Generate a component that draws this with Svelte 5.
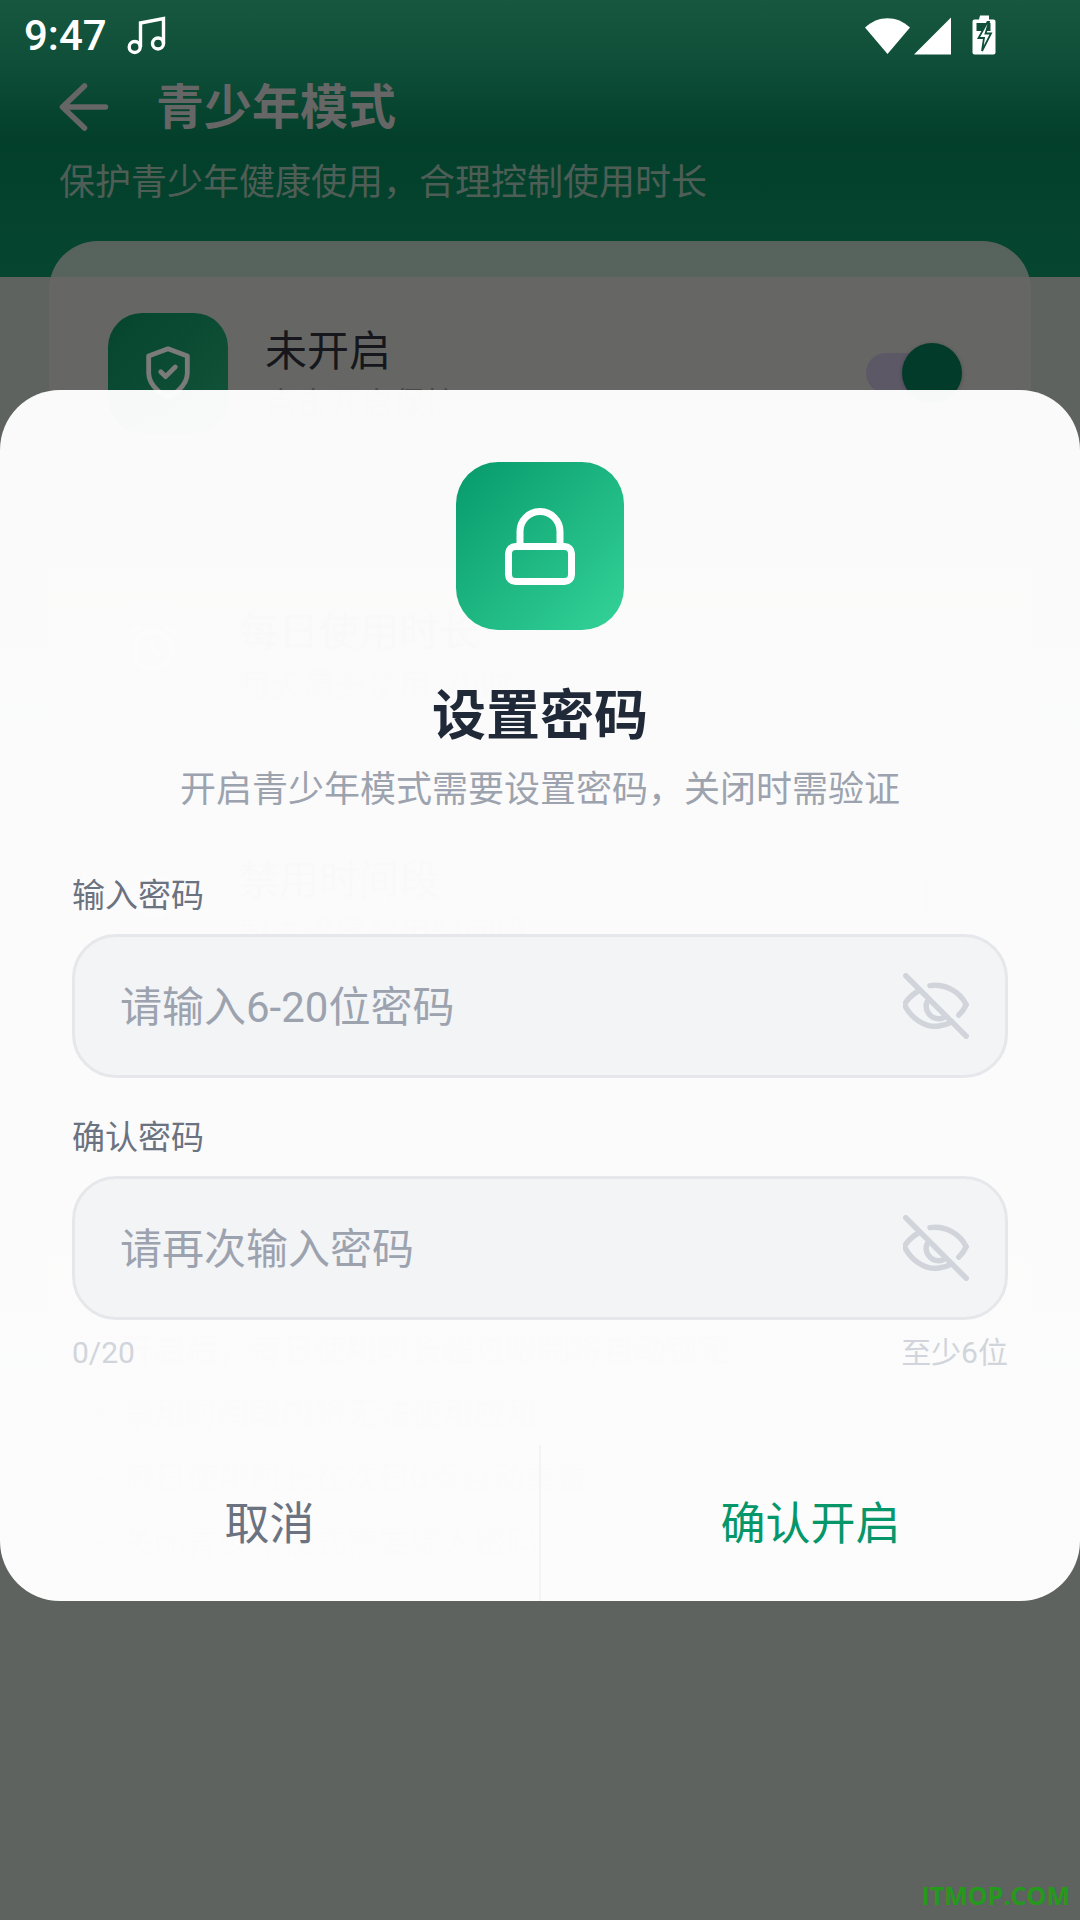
<script>
  const tips = [
    '开启后，每日使用时长超过限制将自动锁定',
    '禁用时间段内将无法使用应用',
    '每日使用时长在次日0点自动重置',
    '关闭青少年模式需要输入密码'
  ];
  const fields = [
    { label: '输入密码', hint: '请输入6-20位密码' },
    { label: '确认密码', hint: '请再次输入密码' }
  ];
</script>

<div class="screen">
  <header class="head">
    <div class="status">
      <span class="time">9:47</span>
      <svg class="note" width="40" height="42" viewBox="0 0 40 42" fill="none" stroke="#fff" stroke-width="3.400">
        <circle cx="8.700" cy="32" r="5.500" />
        <circle cx="32" cy="28.500" r="5.500" />
        <path d="M14.500 32V8L37.500 3.500V28.500" />
      </svg>
      <span class="grow"></span>
      <svg class="sys" width="135" height="42" viewBox="0 0 135 42">
        <path d="M1 13.500C14 1 33 1 46 13.500L23.500 40Z" fill="#fff" />
        <path d="M87 3.500V40.500H50Z" fill="#fff" />
        <path d="M116 1.500h9v4h4.500a2 2 0 0 1 2 2V38.500a2 2 0 0 1-2 2h-19a2 2 0 0 1-2-2V7.500a2 2 0 0 1 2-2h4.500Z" fill="#fff" />
        <path d="M112.500 9h14v8h-14Z" fill="#0f4f39" />
        <path d="M123.500 8L114.500 24h5.500l-2 13L127 19.500h-5.500L125 8Z" fill="#fff" stroke="#0f4f39" stroke-width="1.800" />
      </svg>
    </div>
    <div class="bar">
      <svg class="back" width="52" height="52" viewBox="0 0 52 52" fill="none" stroke="#666" stroke-width="5.500" stroke-linecap="round" stroke-linejoin="round">
        <path d="M47.500 25H4.500M26.500 4L4.500 25l22 21" />
      </svg>
      <span class="page-title">青少年模式</span>
    </div>
    <p class="page-sub">保护青少年健康使用，合理控制使用时长</p>
  </header>

  <section class="card">
    <div class="row first">
      <div class="tile big">
        <svg width="58" height="58" viewBox="0 0 24 24" fill="none" stroke="#7b7b7b" stroke-width="2" stroke-linecap="round" stroke-linejoin="round">
          <path d="M12 22s8-3.500 8-10V5l-8-3-8 3v7c0 6.500 8 10 8 10Z" />
          <path d="M9 11.500l2 2 4-4" />
        </svg>
      </div>
      <div class="txt">
        <div class="name">未开启</div>
        <div class="desc">点击开启保护</div>
      </div>
      <div class="toggle"><span class="thumb"></span></div>
    </div>
    <div class="row second">
      <div class="tile">
        <svg width="56" height="56" viewBox="0 0 24 24" fill="none" stroke="#a0a0a0" stroke-width="2" stroke-linecap="round">
          <circle cx="12" cy="13" r="8" /><path d="M12 9v4l2 2M3 5l3-2M21 5l-3-2" />
        </svg>
      </div>
      <div class="txt">
        <div class="name ghost">每日使用时长</div>
        <div class="desc">每天最多使用2小时</div>
      </div>
    </div>
    <div class="row third">
      <div class="tile">
        <svg width="56" height="56" viewBox="0 0 24 24" fill="none" stroke="#a0a0a0" stroke-width="2" stroke-linecap="round">
          <circle cx="12" cy="12" r="8" /><path d="M12 8v4h4" />
        </svg>
      </div>
      <div class="txt">
        <div class="name ghost">禁用时间段</div>
        <div class="desc">暂未设置禁用时间段</div>
      </div>
      <svg class="plus" width="32" height="32" viewBox="0 0 32 32" stroke="#4a4a4a" stroke-width="2.500"><path d="M16 2v28M2 16h28" /></svg>
    </div>
    <ul class="tips">
      {#each tips as t}
        <li>{t}</li>
      {/each}
    </ul>
  </section>

  <div class="dialog">
    <div class="body">
      <div class="lock">
        <svg width="84" height="84" viewBox="0 0 84 84" fill="none" stroke="#fff" stroke-width="7">
          <rect x="10.500" y="42.500" width="63" height="35" rx="7" />
          <path d="M22 42.500V27.500a20 20 0 0 1 40 0V42.500" />
        </svg>
      </div>
      <h1>设置密码</h1>
      <p class="lead">开启青少年模式需要设置密码，关闭时需验证</p>
      {#each fields as f}
        <label class="lab">{f.label}</label>
        <div class="input">
          <span class="hint">{f.hint}</span>
          <svg class="eye" width="66" height="66" viewBox="0 0 24 24" fill="none" stroke="#d1d5db" stroke-width="2" stroke-linecap="round" stroke-linejoin="round">
            <path d="M9.800 4.600C15 3.800 20.500 6.500 23 11.500Q22 13.700 20.300 15.300" />
            <path d="M5.200 6.800Q2 8.800 .5 11.500C3 16.500 8 20 13 19.300Q15.600 19 17.800 17.800" />
            <path d="M8.700 10.600C7.600 13.500 10 16.800 13.300 16.600Q14.400 16.500 15.200 16" />
            <path d="M1 1L23 23" />
          </svg>
        </div>
      {/each}
      <div class="count"><span>0/20</span><span>至少6位</span></div>
    </div>
    <div class="actions">
      <button class="cancel">取消</button>
      <button class="ok">确认开启</button>
    </div>
  </div>

  <div class="mark">ITMOP.COM</div>
</div>

<style>
  :global(body) { margin: 0; }
  .screen {
    position: relative;
    width: 1080px;
    height: 1920px;
    overflow: hidden;
    background: #5f6360;
    font-family: Roboto, "Noto Sans CJK SC", sans-serif;
  }
  .head {
    height: 277px;
    box-sizing: border-box;
    background: linear-gradient(180deg, #18573f 0%, #0f4f39 22%, #033f2b 50%, #064630 100%);
  }
  .status {
    display: flex;
    align-items: center;
    height: 72px;
    padding: 0 81px 0 24px;
  }
  .time { color: #fff; font-size: 42px; font-weight: 500; line-height: 72px; }
  .note { margin-left: 19px; }
  .grow { flex: 1; }
  .sys { margin-top: -2px; }
  .bar { display: flex; align-items: center; height: 60px; margin-top: 6px; padding-left: 58px; }
  .back { flex: none; }
  .page-title {
    margin-left: 46px;
    font-size: 48px;
    font-weight: 700;
    color: #666;
    line-height: 60px;
  }
  .page-sub {
    margin: 20px 0 0 59px;
    font-size: 36px;
    line-height: 50px;
    color: #4e5e56;
  }
  .card {
    position: relative;
    box-sizing: border-box;
    width: 982px;
    height: 1349px;
    margin: -36px 0 0 49px;
    padding: 72px 59px 0;
    border-radius: 49px 49px 0 0;
    background: rgba(103, 104, 102, .843);
  }
  .row { display: flex; align-items: flex-start; }
  .second { margin-top: 170px; }
  .third { margin-top: 144px; }
  .tile {
    flex: none;
    display: flex;
    align-items: center;
    justify-content: center;
    width: 90px;
    height: 90px;
    border-radius: 28px;
    background: #6e6e6e;
  }
  .tile.big { width: 120px; height: 120px; border-radius: 34px; background: linear-gradient(135deg, #06442e, #125439); }
  .txt { margin-left: 37px; }
  .second .txt, .third .txt { margin-left: 41px; }
  .name { font-size: 42px; line-height: 52px; margin-top: 13px; color: #15171c; }
  .name.ghost { font-size: 40px; margin-top: 4px; color: #2a2a2a; }
  .desc { font-size: 32px; line-height: 44px; margin-top: 4px; color: #4a4a4a; }
  .toggle {
    position: absolute;
    left: 817px;
    top: 112px;
    width: 88px;
    height: 40px;
    border-radius: 20px;
    background: #5d5866;
  }
  .thumb {
    position: absolute;
    right: -8px;
    top: -10px;
    width: 60px;
    height: 60px;
    border-radius: 50%;
    background: #023b29;
    box-shadow: 0 1px 4px rgba(0, 0, 0, .25);
  }
  .plus { position: absolute; left: 861px; top: 639px; }
  .tips {
    list-style: none;
    margin: 363px 0 0 -10px;
    padding: 0;
    font-size: 32px;
    line-height: 64px;
    color: #3d3d3d;
  }
  .tips li { display: flex; align-items: center; gap: 18px; }
  .tips li::before { content: ""; width: 6px; height: 6px; border-radius: 50%; background: #3d3d3d; }
  .dialog {
    position: absolute;
    left: 0;
    top: 390px;
    width: 1080px;
    height: 1211px;
    display: flex;
    flex-direction: column;
    border-radius: 60px;
    background: linear-gradient(180deg, rgba(255, 255, 255, .97), rgba(255, 255, 255, .98));
  }
  .body { flex: 1; display: flex; flex-direction: column; padding: 72px 72px 0; }
  .lock {
    align-self: center;
    display: flex;
    align-items: center;
    justify-content: center;
    width: 168px;
    height: 168px;
    border-radius: 42px;
    background: linear-gradient(135deg, #079a6b, #34d399);
  }
  h1 {
    margin: 52px 0 0;
    text-align: center;
    font-size: 54px;
    line-height: 70px;
    font-weight: 700;
    color: #1f2937;
  }
  .lead {
    margin: 13px 0 0;
    text-align: center;
    font-size: 36px;
    line-height: 50px;
    color: #9ca3af;
  }
  .lab {
    display: block;
    margin-top: 40px;
    font-size: 33px;
    line-height: 40px;
    color: #6b7280;
  }
  .lead + .lab { margin-top: 61px; }
  .input {
    display: flex;
    align-items: center;
    justify-content: space-between;
    box-sizing: border-box;
    height: 144px;
    margin-top: 18px;
    padding: 0 36px 0 45px;
    border: 3px solid #e5e7eb;
    border-radius: 44px;
    background: #f3f4f6;
  }
  .hint { font-size: 42px; color: #9ca3af; padding-bottom: 5px; }
  .eye { flex: none; }
  .count {
    display: flex;
    justify-content: space-between;
    margin-top: 13px;
    font-size: 30px;
    line-height: 40px;
    color: #d1d5db;
  }
  .actions { display: flex; height: 156px; flex: none; }
  .actions button {
    flex: 1;
    border: 0;
    padding: 0 0 6px;
    background: none;
    font: inherit;
    font-size: 45px;
  }
  .actions .cancel { color: #6b7280; border-right: 2px solid #f3f4f6; }
  .ok { color: #059669; }
  .mark {
    position: absolute;
    right: 10px;
    bottom: 8px;
    font-family: "Open Sans", sans-serif;
    font-size: 25px;
    font-weight: 700;
    line-height: 34px;
    color: #249a1c;
  }
</style>
